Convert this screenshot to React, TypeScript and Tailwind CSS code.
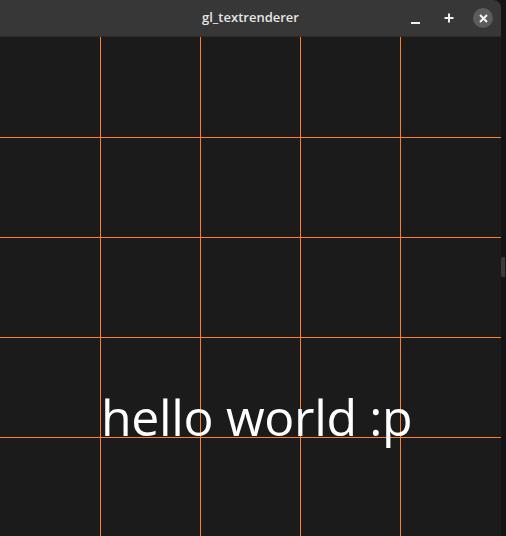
import React from 'react';

const GRID = [100, 200, 300, 400];

export default function App() {
  return (
    <div className="w-[506px] h-[536px] bg-[#141414] flex overflow-hidden">
      <div className="w-[501px] h-full flex flex-col rounded-tr-[8px] overflow-hidden bg-[#1b1b1b]">
        {/* title bar */}
        <div className="h-[37px] shrink-0 bg-[#373737] border-b border-[#2c2c2c] flex items-center relative font-['Open_Sans',sans-serif]">
          <div className="flex-1 text-center text-[13px] font-semibold text-[#e6e6e6]">gl_textrenderer</div>
          <div className="absolute right-[8px] top-0 h-full flex items-center gap-[14px]">
            <span className="w-[20px] flex justify-center items-end h-[20px] pb-[4px]">
              <span className="w-[9px] h-[2px] bg-[#f0f0f0]" />
            </span>
            <span className="w-[20px] h-[20px] flex items-center justify-center">
              <svg width="10" height="10" viewBox="0 0 10 10">
                <path d="M5 0.5v9M0.5 5h9" stroke="#f0f0f0" strokeWidth="2" />
              </svg>
            </span>
            <span className="w-[20px] h-[20px] rounded-full bg-[#5c5c5c] flex items-center justify-center">
              <svg width="9" height="9" viewBox="0 0 9 9">
                <path d="M1 1l7 7M8 1l-7 7" stroke="#f4f4f4" strokeWidth="2" />
              </svg>
            </span>
          </div>
        </div>
        {/* gl canvas */}
        <div className="flex-1 relative bg-[#1b1b1b]">
          <svg className="absolute inset-0" width="501" height="499">
            {GRID.map((v) => (
              <line key={'h' + v} x1="0" x2="501" y1={v + 0.5} y2={v + 0.5} stroke="#ff7f27" strokeWidth="1" />
            ))}
            {GRID.map((v) => (
              <line key={'v' + v} y1="0" y2="499" x1={v + 0.5} x2={v + 0.5} stroke="#ff7f27" strokeWidth="1" />
            ))}
          </svg>
          <div className="absolute left-[101px] top-[350px] text-white text-[50px] leading-[60px] tracking-[-0.35px] font-['Open_Sans',sans-serif]">
            hello world :p
          </div>
        </div>
      </div>
      <div className="flex-1 flex flex-col pt-[257px]">
        <div className="w-[4px] h-[20px] bg-[#3a3a3a] rounded-l-[2px]" />
      </div>
    </div>
  );
}
